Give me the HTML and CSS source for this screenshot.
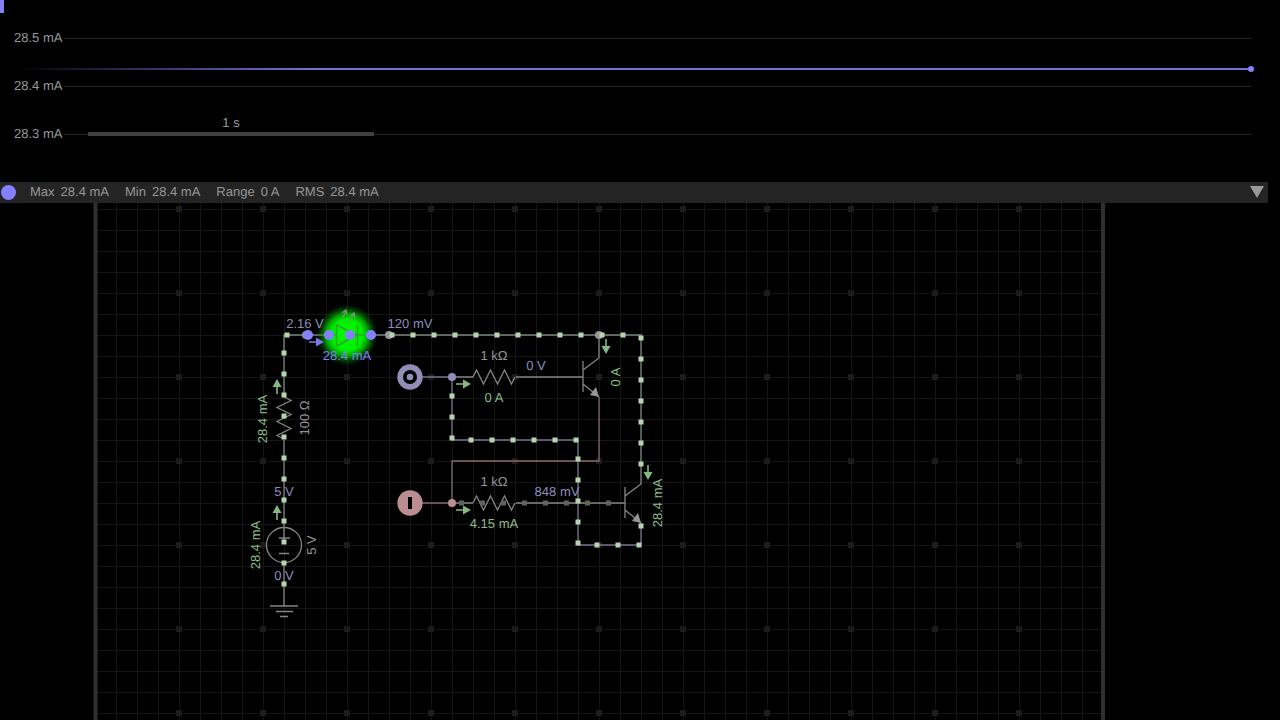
FILE: index.html
```html
<!DOCTYPE html>
<html lang="en">
<head>
<meta charset="utf-8">
<title>Circuit simulator</title>
<link rel="stylesheet" href="styles.css">
</head>
<body>
<main class="app">
  <section class="scope" aria-label="Current graph">
    <div class="tick"><span class="tick-label">28.5 mA</span><span class="rule"></span></div>
    <div class="tick"><span class="tick-label">28.4 mA</span><span class="rule"></span></div>
    <div class="tick"><span class="tick-label">28.3 mA</span><span class="rule"></span></div>
    <div class="trace"></div>
    <div class="timescale">1 s</div>
    <div class="marker"></div>
  </section>
  <div class="stats">
    <span class="channel"></span>
    <dl class="values">
      <div class="stat"><dt>Max</dt><dd>28.4 mA</dd></div>
      <div class="stat"><dt>Min</dt><dd>28.4 mA</dd></div>
      <div class="stat"><dt>Range</dt><dd>0 A</dd></div>
      <div class="stat"><dt>RMS</dt><dd>28.4 mA</dd></div>
    </dl>
    <button class="collapse" type="button" aria-label="Collapse graph"><svg width="14" height="12" viewBox="0 0 14 12"><path d="M0 0H14L7 12Z"/></svg></button>
  </div>
  <section class="workspace" aria-label="Circuit">
    <svg class="board" viewBox="0 203 1280 517" preserveAspectRatio="xMidYMin slice">
      <defs>
        <pattern id="grid" x="179" y="209" width="21" height="21" patternUnits="userSpaceOnUse">
          <path class="grid-line" d="M0 .5H21M.5 0V21"/>
        </pattern>
        <pattern id="major" x="137" y="167" width="84" height="84" patternUnits="userSpaceOnUse">
          <rect class="grid-dot" x="39" y="39" width="6" height="6"/>
        </pattern>
        <radialGradient id="glow">
          <stop offset="0" stop-color="#00fa00"/>
          <stop offset=".5" stop-color="#00f000"/>
          <stop offset=".68" stop-color="#00c000" stop-opacity=".85"/>
          <stop offset=".85" stop-color="#008000" stop-opacity=".4"/>
          <stop offset="1" stop-color="#005000" stop-opacity="0"/>
        </radialGradient>
        <path id="zigzag" d="M-21 0L-17.500-7L-10.500 7L-3.500-7L3.500 7L10.500-7L17.500 7L21 0"/>
        <path id="arrow" d="M0-.8H7V-4.500L15 0L7 4.500V.8H0Z"/>
        <g id="npn">
          <path class="wire" d="M-16-16V15M-16-7L0-19M-16 7L0 20"/>
          <path class="head" d="M0 20L-9 18L-3 10Z"/>
        </g>
      </defs>
      <rect x="96" y="203" width="1006" height="517" fill="url(#grid)"/>
      <rect x="137" y="203" width="924" height="517" fill="url(#major)"/>
      <path class="edge" d="M95.500 203V720M1103 203V720"/>

      <path class="wire live" d="M284 395V335H337M357 335H641V484M284 440V528"/>
      <circle cx="347" cy="335" r="31" fill="url(#glow)"/>
      <g class="led">
        <path d="M327 335H337M357 335H367M336.500 325V346L357 335ZM357.500 325V346"/>
      </g>
      <g class="rays">
        <path d="M342 319L346 311M342 313L346 310L347 315M349 322L354 314M350 316L354 313L355 318"/>
      </g>

      <path class="wire" d="M599 335V358M516 377H583M452 377H473M452 503H473M516 503H625M284 563V606M270 606H298M276 611.500H293M280 616.500H288"/>
      <path class="wire violet" d="M422 377H452V440H578V545H641V523"/>
      <path class="wire rose" d="M422 503H452V461H599V397"/>
      <use href="#zigzag" class="wire" transform="translate(494 377)"/>
      <use href="#zigzag" class="wire" transform="translate(494 503)"/>
      <use href="#zigzag" class="wire" transform="translate(284 418) rotate(90)"/>
      <use href="#npn" transform="translate(599 377)"/>
      <use href="#npn" transform="translate(641 503)"/>
      <circle class="wire" cx="284" cy="545" r="17.500"/>
      <path class="wire" d="M279 538H290M284 528V543M279 553.500H289"/>

      <circle class="node" cx="306" cy="335" r="4"/>
      <circle class="node" cx="389" cy="335" r="4"/>
      <circle class="node" cx="599" cy="335" r="4"/>
      <circle class="node-violet" cx="452" cy="377" r="4"/>
      <circle class="node-rose" cx="452" cy="503" r="4"/>

      <path class="charge" d="M287 335h0M392 335h0M413 335h0M434 335h0M455 335h0M476 335h0M497 335h0M518 335h0M539 335h0M560 335h0M581 335h0M602 335h0M623 335h0"/>
      <path class="charge" d="M641 338v0M641 359v0M641 380v0M641 401v0M641 422v0M641 443v0M641 464v0M641 526v0M597 545h0M618 545h0M639 545h0"/>
      <path class="charge" d="M578 459v0M578 480v0M578 501v0M578 522v0M578 543v0M576 440h0M555 440h0M534 440h0M513 440h0M492 440h0M471 440h0M452 396v0M452 417v0M452 438v0"/>
      <path class="charge" d="M284 353v0M284 374v0M284 395v0M284 416v0M284 437v0M284 458v0M284 479v0M284 500v0M284 521v0M284 542v0M284 563v0M284 584v0"/>
      <path class="charge dim" d="M461.500 503h0M482.500 503h0M503.500 503h0M524.500 503h0M545.500 503h0M566.500 503h0M587.500 503h0M608.500 503h0"/>
      <path class="charge selected" d="M308 335h0M329 335h0M350 335h0M371 335h0"/>

      <circle class="node-violet" cx="410" cy="377" r="12.700"/>
      <circle cx="410" cy="377" r="7"/>
      <circle class="node-violet" cx="410" cy="377" r="3.300"/>
      <circle class="node-rose" cx="410" cy="503" r="12.700"/>
      <rect x="408" y="497" width="4" height="12"/>

      <g class="flow">
        <use href="#arrow" transform="translate(456 384)"/>
        <use href="#arrow" transform="translate(456 510)"/>
        <use href="#arrow" transform="translate(277 394) rotate(-90)"/>
        <use href="#arrow" transform="translate(277 520) rotate(-90)"/>
        <use href="#arrow" transform="translate(606 339) rotate(90)"/>
        <use href="#arrow" transform="translate(648 465) rotate(90)"/>
        <use href="#arrow" class="flow-selected" transform="translate(309 342)"/>
      </g>

      <g class="label volt">
        <text x="305" y="328">2.16 V</text>
        <text x="410" y="328">120 mV</text>
        <text x="536" y="370">0 V</text>
        <text x="557" y="496">848 mV</text>
        <text x="284" y="496">5 V</text>
        <text x="284" y="580">0 V</text>
      </g>
      <g class="label part">
        <text x="494" y="360">1 kΩ</text>
        <text x="494" y="486">1 kΩ</text>
        <text transform="translate(309 418) rotate(-90)">100 Ω</text>
        <text transform="translate(316 545) rotate(-90)">5 V</text>
      </g>
      <g class="label amp">
        <text x="494" y="402">0 A</text>
        <text x="494" y="528">4.15 mA</text>
        <text transform="translate(267 419) rotate(-90)">28.4 mA</text>
        <text transform="translate(260 545) rotate(-90)">28.4 mA</text>
        <text transform="translate(620 377) rotate(-90)">0 A</text>
        <text transform="translate(662 503) rotate(-90)">28.4 mA</text>
        <text class="picked" x="347" y="360">28.4 mA</text>
      </g>
    </svg>
  </section>
</main>
</body>
</html>
```

FILE: styles.css
```css
* { box-sizing: border-box; }

body {
  margin: 0;
  background: #000;
  color: #969696;
  font: 13px/16px "Liberation Sans", Arial, sans-serif;
  text-rendering: geometricPrecision;
}

.app {
  display: flex;
  flex-direction: column;
  height: 100vh;
  overflow: hidden;
}

/* Graph */
.scope {
  position: relative;
  display: flex;
  flex-direction: column;
  gap: 32px;
  padding: 30px 28px 40px 14px;
}
.tick {
  display: flex;
  align-items: center;
  gap: 2px;
}
.tick-label { flex: none; }
.rule {
  flex: 1;
  height: 1px;
  background: #242424;
}
.trace {
  position: absolute;
  left: 14px;
  right: 29px;
  top: 68px;
  height: 2px;
  background: linear-gradient(to right, transparent, #7670d8 24%, #7670d8);
}
.trace::after {
  content: "";
  position: absolute;
  right: -3px;
  top: -2px;
  width: 6px;
  height: 6px;
  border-radius: 50%;
  background: #8780ff;
}
.timescale {
  position: absolute;
  left: 88px;
  top: 115px;
  width: 286px;
  height: 21px;
  border-bottom: 4px solid #404040;
  text-align: center;
}
.marker {
  position: absolute;
  left: 0;
  top: 0;
  width: 4px;
  height: 13px;
  background: #8580f8;
}

/* Readings */
.stats {
  display: flex;
  align-items: center;
  gap: 14px;
  height: 21px;
  margin-right: 12px;
  padding: 0 4px 1px 1px;
  background: #242424;
}
.channel {
  width: 15px;
  height: 15px;
  border-radius: 50%;
  background: #8580ff;
}
.values {
  display: flex;
  flex: 1;
  gap: 16px;
  margin: 0;
}
.stat {
  display: flex;
  gap: 6px;
}
.stat dd { margin: 0; }
.collapse {
  display: flex;
  padding: 0;
  border: 0;
  background: none;
}
.collapse svg { fill: #999; }

/* Circuit */
.workspace {
  flex: 1;
  min-height: 0;
}
.board {
  display: block;
  width: 100%;
  height: 100%;
}
.grid-line { stroke: #151515; fill: none; }
.grid-dot { fill: #1c1c1c; }
.edge { stroke: #303030; stroke-width: 4; }
.wire { fill: none; stroke: #858585; stroke-width: 1.3; }
.live { stroke: #7c8580; }
.violet { stroke: #77738f; }
.rose { stroke: #8a6a6c; }
.led { fill: none; stroke: #27a824; stroke-width: 1.5; }
.rays { fill: none; stroke: #6f9a6c; stroke-width: 1.3; }
.head { fill: #969696; }
.node { fill: #969696; }
.node-violet { fill: #918db6; }
.node-rose { fill: #ba8d91; }
.charge { fill: none; stroke: #b4d5b0; stroke-width: 5; stroke-linecap: square; }
.dim { stroke: #5e645e; }
.selected { stroke: #8580ff; stroke-width: 10; stroke-linecap: round; }
.flow { fill: #85b784; }
.flow-selected { fill: #7c78e8; }
.label { text-anchor: middle; }
.volt { fill: #8f8bbd; }
.part { fill: #969696; }
.amp { fill: #8abb88; }
.picked { fill: #827ef0; }
```
